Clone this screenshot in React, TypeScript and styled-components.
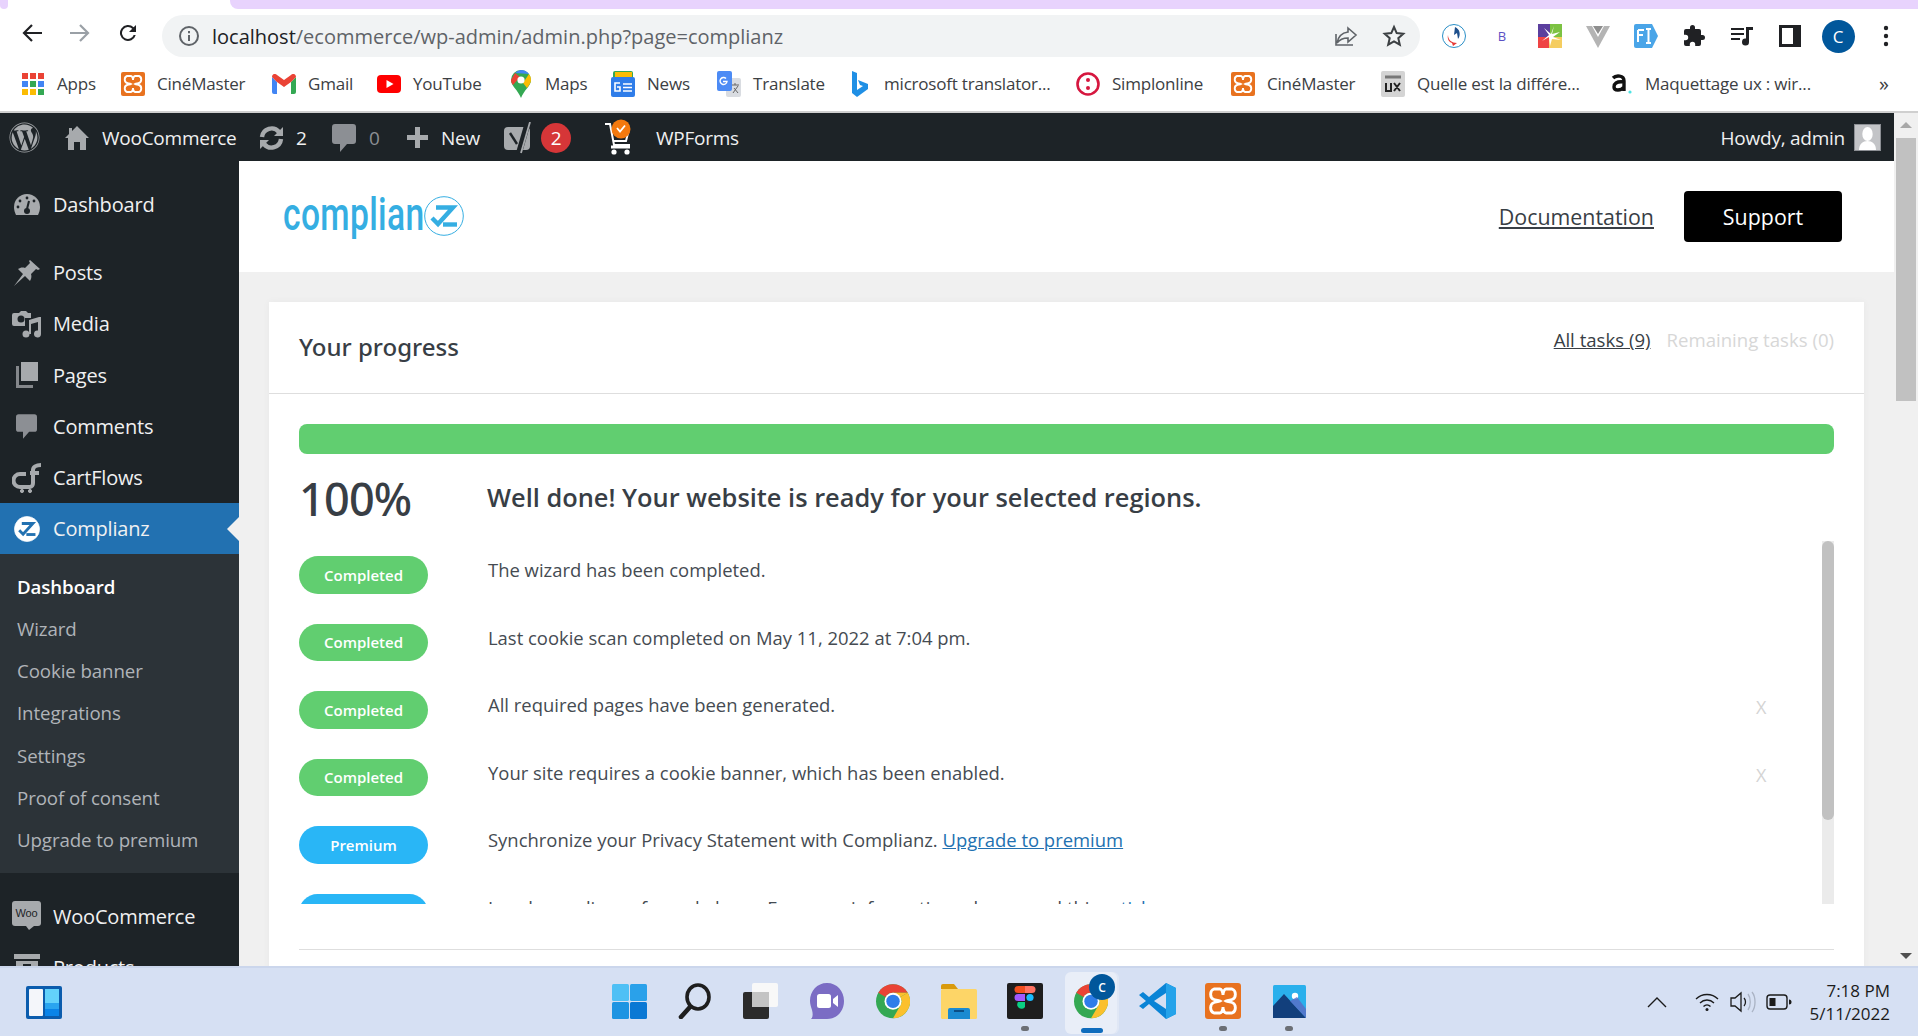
import React from "react";
import styled, { createGlobalStyle } from "styled-components";
import { FaWordpress } from "react-icons/fa";

const Global = createGlobalStyle`
  html, body { margin: 0; padding: 0; height: 100%; overflow: hidden; }
  body { font-family: "Open Sans", "Noto Sans", sans-serif; background: #fff; }
  * { box-sizing: border-box; }
`;

const Page = styled.div`
  width: 1918px;
  height: 1036px;
  display: flex;
  flex-direction: column;
  overflow: hidden;
`;

/* browser chrome */
const TabStrip = styled.div`
  height: 9px;
  flex: none;
  display: flex;
  justify-content: space-between;
`;
const TabCorner = styled.div<{ $w: number }>`
  width: ${({ $w }) => $w}px;
  background: #e8d3fd;
  border-bottom-left-radius: 8px;
  border-bottom-right-radius: ${({ $w }) => ($w < 20 ? 8 : 0)}px;
`;
const Toolbar = styled.div`
  height: 48px;
  flex: none;
  display: flex;
  align-items: center;
  padding-left: 8px;
`;
const NavBtn = styled.div`
  width: 48px;
  height: 32px;
  display: flex;
  align-items: center;
  justify-content: center;
`;
const Omnibox = styled.div`
  margin-left: 10px;
  width: 1258px;
  height: 42px;
  margin-top: 6px;
  border-radius: 21px;
  background: #f1f3f4;
  display: flex;
  align-items: center;
  padding: 0 2px 0 16px;
  font-size: 20px;
  color: #5f6368;
`;
const Url = styled.div`
  margin-left: 12px;
  flex: 1;
  b { font-weight: 400; color: #202124; }
`;
const OmniIcon = styled.div`
  width: 48px;
  display: flex;
  justify-content: center;
`;
const Extensions = styled.div`
  display: flex;
  align-items: center;
  margin-top: 6px;
  margin-left: 10px;
`;
const Ext = styled.div`
  width: 48px;
  display: flex;
  justify-content: center;
  align-items: center;
`;
const Avatar = styled.div`
  width: 33px;
  height: 33px;
  border-radius: 50%;
  background: #01579b;
  color: #fff;
  font-size: 17px;
  display: flex;
  align-items: center;
  justify-content: center;
`;
const BookmarkBar = styled.div`
  height: 56px;
  flex: none;
  display: flex;
  align-items: center;
  padding-left: 21px;
  padding-bottom: 1px;
  border-bottom: 2px solid #cfcfcf;
  font-size: 17px;
  color: #3c4043;
`;
const Bookmark = styled.div<{ $w: number }>`
  width: ${({ $w }) => $w}px;
  display: flex;
  align-items: center;
  gap: 12px;
  white-space: nowrap;
  letter-spacing: -0.2px;
`;
const BookmarkIcon = styled.div`
  width: 24px;
  height: 26px;
  flex: none;
  display: flex;
  align-items: center;
  justify-content: center;
`;
const More = styled.div`
  margin-left: 45px;
  font-size: 20px;
`;

const Middle = styled.div`
  flex: 1;
  min-height: 0;
  display: flex;
`;
const MiddleMain = styled.div`
  flex: 1;
  min-width: 0;
  display: flex;
  flex-direction: column;
`;

/* wp admin bar */
const AdminBar = styled.div`
  height: 48px;
  flex: none;
  background: #1d2327;
  color: #f0f0f1;
  display: flex;
  align-items: center;
  font-size: 19px;
  letter-spacing: -0.25px;
  padding-top: 1px;
`;
const BarItem = styled.div<{ $w: number; $dim?: boolean; $gap?: number; $pad?: number }>`
  width: ${({ $w }) => $w}px;
  flex: none;
  display: flex;
  align-items: center;
  gap: ${({ $gap }) => $gap ?? 11}px;
  padding-left: ${({ $pad }) => $pad ?? 0}px;
  white-space: nowrap;
  color: ${({ $dim }) => ($dim ? "#8c8f94" : "#f0f0f1")};
  svg { flex: none; }
`;
const Badge = styled.span`
  width: 30px;
  height: 30px;
  border-radius: 50%;
  background: #d63638;
  color: #fff;
  font-size: 19px;
  display: flex;
  align-items: center;
  justify-content: center;
  margin-left: -4px;
`;
const Howdy = styled.div`
  margin-left: auto;
  padding-right: 13px;
  display: flex;
  align-items: center;
  gap: 9px;
`;
const UserPic = styled.div`
  width: 27px;
  height: 27px;
  background: #c3c4c7;
  border: 1px solid #8c8f94;
  overflow: hidden;
`;

/* page body */
const Body = styled.div`
  flex: 1;
  min-height: 0;
  display: flex;
  background: #f0f0f0;
  overflow: hidden;
`;
const Sidebar = styled.nav`
  width: 239px;
  flex: none;
  background: #1d2327;
  padding-top: 18px;
`;
const MenuRow = styled.div<{ $active?: boolean; $gap?: number }>`
  position: relative;
  height: 51.2px;
  margin-top: ${({ $gap }) => $gap ?? 0}px;
  display: flex;
  align-items: center;
  gap: 10px;
  padding-left: 10px;
  font-size: 20px;
  letter-spacing: -0.2px;
  color: #f0f0f1;
  background: ${({ $active }) => ($active ? "#2271b1" : "transparent")};
  ${({ $active }) =>
    $active &&
    `&::after {
      content: "";
      position: absolute;
      right: 0;
      top: 14px;
      border: 12px solid transparent;
      border-left-width: 0;
      border-right-color: #f0f0f0;
    }`}
`;
const MenuIcon = styled.div`
  width: 33px;
  height: 33px;
  flex: none;
  display: flex;
  align-items: center;
  justify-content: center;
`;
const SubMenu = styled.div`
  background: #2c3338;
  padding: 11px 0 12px 17px;
  margin-bottom: 18px;
`;
const SubItem = styled.div<{ $current?: boolean }>`
  height: 42.2px;
  display: flex;
  align-items: center;
  font-size: 18.7px;
  letter-spacing: -0.1px;
  color: ${({ $current }) => ($current ? "#fff" : "#b0b4b9")};
  font-weight: ${({ $current }) => ($current ? 600 : 400)};
`;
const Main = styled.main`
  flex: 1;
  min-width: 0;
`;
const Header = styled.header`
  height: 111px;
  background: #fff;
  display: flex;
  align-items: center;
  padding: 0 52px 0 44px;
`;
const Logo = styled.div`
  display: flex;
  align-items: center;
  height: 60px;
  flex: none;
  margin-top: -2px;
`;
const LogoWord = styled.span`
  font-family: "Roboto", sans-serif;
  font-size: 46px;
  font-weight: 500;
  line-height: 60px;
  color: #35aee2;
  display: inline-block;
  width: 141px;
  margin-top: -4px;
  transform: scaleX(0.73);
  transform-origin: left center;
  letter-spacing: 0.5px;
`;
const DocLink = styled.a`
  margin-left: auto;
  font-size: 21.4px;
  color: #383e45;
  text-decoration: underline;
`;
const SupportBtn = styled.button`
  margin-left: 30px;
  width: 158px;
  height: 51px;
  background: #000;
  color: #fff;
  border: 0;
  border-radius: 4px;
  font: inherit;
  font-size: 21.4px;
`;
const Card = styled.section`
  margin: 30px 30px 0;
  background: #fff;
  box-shadow: 0 0 8px rgba(0, 0, 0, 0.04);
`;
const CardHead = styled.div`
  height: 92px;
  border-bottom: 1px solid #dedede;
  padding: 0 30px;
  display: flex;
  align-items: center;
  justify-content: space-between;
`;
const CardTitle = styled.h2`
  margin: 0 0 2px;
  font-family: "Noto Sans", sans-serif;
  font-size: 24px;
  font-weight: 500;
  color: #383e45;
`;
const Tabs = styled.div`
  display: flex;
  gap: 16px;
  font-size: 18.6px;
  margin-top: -16px;
`;
const TabLink = styled.a<{ $on?: boolean }>`
  color: ${({ $on }) => ($on ? "#383e45" : "#d7d7d7")};
  text-decoration: ${({ $on }) => ($on ? "underline" : "none")};
`;
const CardBody = styled.div`
  padding: 30px 30px 0;
`;
const ProgressBar = styled.div`
  height: 30px;
  background: #61ce70;
  border-radius: 8px;
`;
const Summary = styled.div`
  height: 87px;
  display: flex;
  align-items: center;
  padding-bottom: 2px;
`;
const Percent = styled.div`
  width: 188px;
  font-family: "Noto Sans", sans-serif;
  font-size: 45px;
  font-weight: 500;
  color: #383e45;
  letter-spacing: -0.8px;
  padding-top: 3px;
`;
const Message = styled.div`
  font-size: 25.4px;
  font-weight: 600;
  color: #383e45;
`;
const TaskList = styled.div`
  position: relative;
  height: 363px;
  overflow: hidden;
`;
const ListTrack = styled.div`
  position: absolute;
  top: 0;
  right: 0;
  bottom: 0;
  width: 12px;
  background: #ebebeb;
`;
const ListThumb = styled.div`
  height: 279px;
  background: #c1c1c1;
  border-radius: 6px;
`;
const TaskRow = styled.div`
  height: 67.5px;
  display: grid;
  grid-template-columns: 189px 1fr 12px;
  align-items: center;
  padding-right: 66px;
  flex: none;
`;
const Pill = styled.div<{ $tone: string }>`
  width: 129px;
  height: 37.5px;
  border-radius: 19px;
  background: ${({ $tone }) => $tone};
  color: #fff;
  font-size: 15px;
  font-weight: 600;
  display: flex;
  align-items: center;
  justify-content: center;
`;
const TaskText = styled.div`
  font-size: 18.45px;
  color: #454b52;
  padding-bottom: 10px;
  white-space: nowrap;
  a { color: #2271b1; text-decoration: underline; }
`;
const Dismiss = styled.div`
  font-size: 18px;
  color: #d4d4d4;
  padding-bottom: 5px;
`;
const CardFoot = styled.div`
  margin-top: 45px;
  height: 60px;
  border-top: 1px solid #dedede;
`;
const PageScroll = styled.div`
  position: relative;
  width: 24px;
  flex: none;
  background: #f0f0f0;
`;
const ScrollThumb = styled.div`
  position: absolute;
  left: 2px;
  right: 2px;
  top: 25px;
  height: 263px;
  background: #c1c1c1;
`;
const ScrollArrow = styled.div<{ $up?: boolean }>`
  position: absolute;
  left: 6px;
  ${({ $up }) => ($up ? "top: 9px;" : "bottom: 7px;")}
  border: 6px solid transparent;
  border-top-width: ${({ $up }) => ($up ? 0 : 6)}px;
  border-bottom-width: ${({ $up }) => ($up ? 6 : 0)}px;
  ${({ $up }) => ($up ? "border-bottom-color: #a8a8a8;" : "border-top-color: #505050;")}
`;

/* windows taskbar */
const Taskbar = styled.footer`
  height: 70px;
  flex: none;
  background: #d6e0f3;
  border-top: 2px solid #cbd6ec;
  display: flex;
  align-items: center;
  padding-left: 26px;
`;
const Apps = styled.div`
  margin-left: 534px;
  display: flex;
`;
const AppSlot = styled.div<{ $state?: "open" | "active" }>`
  position: relative;
  width: 66px;
  height: 62px;
  display: flex;
  align-items: center;
  justify-content: center;
  margin-top: 2px;
  padding-bottom: 4px;
  ${({ $state }) =>
    $state === "open" &&
    `&::after {
      content: "";
      position: absolute;
      left: 29px;
      bottom: 3px;
      width: 8px;
      height: 5px;
      border-radius: 3px;
      background: #6c6f75;
    }`}
  ${({ $state }) =>
    $state === "active" &&
    `background: #e9eef8;
    border-radius: 6px;
    box-shadow: 2px 0 0 #e0e7f5;
    width: 52px;
    margin: 2px 7px 0;
    &::after {
      content: "";
      position: absolute;
      left: 16px;
      bottom: 1px;
      width: 22px;
      height: 5px;
      border-radius: 3px;
      background: #0f6cbd;
    }`}
`;
const CornerBadge = styled.div`
  position: absolute;
  top: 2px;
  right: 2px;
  width: 26px;
  height: 26px;
  border-radius: 50%;
  background: #01579b;
  color: #fff;
  font-size: 12px;
  font-weight: 600;
  display: flex;
  align-items: center;
  justify-content: center;
`;
const Tray = styled.div`
  margin-left: auto;
  padding-right: 28px;
  display: flex;
  align-items: center;
`;
const TrayIcon = styled.div<{ $w: number; $ml?: number }>`
  width: ${({ $w }) => $w}px;
  margin-left: ${({ $ml }) => $ml ?? 0}px;
  display: flex;
  justify-content: center;
`;
const Clock = styled.div`
  margin-left: 10px;
  text-align: right;
  font-size: 17px;
  line-height: 23px;
  color: #1b1b1b;
`;

const Back = ({ c = "#202124" }: { c?: string }) => (
  <svg width="22" height="22" viewBox="0 0 22 22" fill="none" stroke={c} strokeWidth="2.2">
    <path d="M21 11H3M11 3l-8 8 8 8" />
  </svg>
);
const Forward = () => (
  <svg width="22" height="22" viewBox="0 0 22 22" fill="none" stroke="#9aa0a6" strokeWidth="2.2">
    <path d="M1 11h18M11 3l8 8-8 8" />
  </svg>
);
const Reload = () => (
  <svg width="24" height="24" viewBox="0 0 24 24" fill="#202124">
    <path d="M17.65 6.35A8 8 0 1 0 19.73 14h-2.08a6 6 0 1 1-1.41-6.24L13 11h7V4z" />
  </svg>
);
const Info = () => (
  <svg width="22" height="22" viewBox="0 0 22 22" fill="none" stroke="#5f6368" strokeWidth="2">
    <circle cx="11" cy="11" r="9" />
    <path d="M11 10v6M11 6v2.2" />
  </svg>
);
const Share = () => (
  <svg width="24" height="24" viewBox="0 0 24 24" fill="none" stroke="#5f6368" strokeWidth="1.6">
    <path d="M14 4l8 7-8 7v-4c-5 0-8 1-11 5 1-6 4-10 11-11zM2 10v11h17" />
  </svg>
);
const Star = () => (
  <svg width="24" height="24" viewBox="0 0 24 24" fill="none" stroke="#3c4043" strokeWidth="2">
    <path d="M12 3l2.7 6.1 6.6.7-5 4.4 1.5 6.5-5.8-3.4-5.8 3.4 1.5-6.5-5-4.4 6.6-.7z" />
  </svg>
);
const SyncExt = () => (
  <svg width="26" height="26" viewBox="0 0 26 26" fill="none">
    <circle cx="13" cy="13" r="11.5" stroke="#2a8fc7" />
    <path d="M14 4c5 2 6 8 3 12l-1-6-3 2z" fill="#1d4f8c" />
    <path d="M7 12c0 5 4 8 9 8l-4 3-1-3c-3-1-5-4-4-8z" fill="#e53935" />
  </svg>
);
const BExt = styled.span`
  color: #5b50c4;
  font-size: 13px;
`;
const ColorExt = () => (
  <svg width="24" height="24" viewBox="0 0 24 24">
    <rect width="12" height="13" fill="#5b3f9e" />
    <rect x="12" width="12" height="13" fill="#7cc242" />
    <rect y="13" width="11" height="11" fill="#ef4444" />
    <rect x="11" y="13" width="13" height="11" fill="#f5cd60" />
    <path d="M12 22L11 13 4 17l7-6-5-7 7 6 3-8-2 8 8-2-7 5 8 3-9-1z" fill="#fff" />
  </svg>
);
const VExt = () => (
  <svg width="24" height="24" viewBox="0 0 24 24">
    <path d="M0 2h24L12 24z" fill="#b4b4b4" />
    <path d="M6 2h12l-6 11z" fill="#fff" />
    <path d="M7 2h10l-5 8z" fill="#8e8e8e" />
  </svg>
);
const FiExt = () => (
  <svg width="24" height="24" viewBox="0 0 24 24">
    <path d="M2 0h16l6 12-6 12H2a2 2 0 0 1-2-2V2a2 2 0 0 1 2-2z" fill="#4aa5e8" />
    <path d="M4 6h6M4 6v12M4 11h5M12 5h5M12 19h5M14.5 5v14" stroke="#fff" strokeWidth="2" fill="none" />
  </svg>
);
const Puzzle = () => (
  <svg width="24" height="24" viewBox="0 0 24 24" fill="#202124">
    <path d="M20.5 11H19V7a2 2 0 0 0-2-2h-4V3.5a2.5 2.5 0 0 0-5 0V5H4a2 2 0 0 0-2 2v3.8h1.5a2.7 2.7 0 0 1 0 5.4H2V20a2 2 0 0 0 2 2h3.8v-1.5a2.7 2.7 0 0 1 5.4 0V22H17a2 2 0 0 0 2-2v-4h1.5a2.5 2.5 0 0 0 0-5z" />
  </svg>
);
const Queue = () => (
  <svg width="24" height="22" viewBox="0 0 24 22" fill="#202124">
    <path d="M1 3h13v2H1zM1 8h13v2H1zM1 13h9v2H1zM16 2h7v3h-4v12a3.5 3.5 0 1 1-3-3.4z" />
  </svg>
);
const SidePanel = () => (
  <svg width="22" height="22" viewBox="0 0 22 22" fill="none" stroke="#202124" strokeWidth="3">
    <rect x="1.5" y="1.5" width="19" height="19" />
    <rect x="14" y="2" width="6" height="18" fill="#202124" stroke="none" />
  </svg>
);
const Dots = () => (
  <svg width="6" height="22" viewBox="0 0 6 22" fill="#202124">
    <circle cx="3" cy="3" r="2.2" />
    <circle cx="3" cy="11" r="2.2" />
    <circle cx="3" cy="19" r="2.2" />
  </svg>
);

const Grid = () => (
  <svg width="22" height="24" viewBox="0 0 22 24">
    {["#ea4335", "#ea4335", "#ea4335", "#4285f4", "#34a853", "#4285f4", "#fbbc04", "#fbbc04", "#34a853"].map((c, i) => (
      <rect key={i} x={(i % 3) * 8} y={Math.floor(i / 3) * 8 + 1} width="6" height="6" fill={c} />
    ))}
  </svg>
);
const Xampp = ({ s = 24 }: { s?: number }) => (
  <svg width={s} height={s} viewBox="0 0 24 24">
    <rect width="24" height="24" rx="2" fill="#e8721f" />
    <path d="M6 4h4c1 0 2 2 2 4 0-2 1-4 2-4h4c3 1 3 6 0 7-1 .4-3 .4-4 1 1 .6 3 .6 4 1 3 1 3 6 0 7h-4c-1 0-2-2-2-4 0 2-1 4-2 4H6c-3-1-3-6 0-7 1-.4 3-.4 4-1-1-.6-3-.6-4-1-3-1-3-6 0-7z" fill="none" stroke="#fff" strokeWidth="1.9" />
  </svg>
);
const Gmail = () => (
  <svg width="24" height="20" viewBox="0 0 24 20">
    <path d="M0 3v15a2 2 0 0 0 2 2h3V8z" fill="#4285f4" />
    <path d="M24 3v15a2 2 0 0 1-2 2h-3V8z" fill="#34a853" />
    <path d="M0 3l5 5 7 5 7-5 5-5c0-3-3-4-5-2l-7 5-7-5C3-1 0 0 0 3z" fill="#ea4335" />
  </svg>
);
const Youtube = () => (
  <svg width="24" height="18" viewBox="0 0 24 18">
    <rect width="24" height="18" rx="4" fill="#f00" />
    <path d="M9.5 5l7 4-7 4z" fill="#fff" />
  </svg>
);
const MapsPin = () => (
  <svg width="20" height="28" viewBox="0 0 20 28">
    <path d="M10 0a10 10 0 0 1 10 10c0 6-7 10-10 18C7 20 0 16 0 10A10 10 0 0 1 10 0z" fill="#34a853" />
    <path d="M10 0a10 10 0 0 1 8 4L4 3a10 10 0 0 1 6-3z" fill="#4285f4" />
    <path d="M18 4a10 10 0 0 1 2 6c0 3-2 5-4 8L12 13z" fill="#fbbc04" />
    <path d="M4 3L0 10c0 2 1 4 2 5l7-8z" fill="#ea4335" />
    <circle cx="10" cy="10" r="3.6" fill="#fff" />
  </svg>
);
const NewsIcon = () => (
  <svg width="24" height="26" viewBox="0 0 24 26">
    <rect x="2" width="20" height="10" rx="2" fill="#34a853" />
    <rect x="4" y="1" width="17" height="8" fill="#fbbc04" />
    <rect y="6" width="24" height="20" rx="2" fill="#2f7de9" />
    <path d="M9 12H4v8h5v-4H6M12 13h9M12 16.5h9M12 20h9" stroke="#fff" strokeWidth="1.6" fill="none" />
  </svg>
);
const TranslateIcon = () => (
  <svg width="24" height="26" viewBox="0 0 24 26">
    <rect x="9" y="7" width="15" height="19" rx="2" fill="#d9dce1" />
    <rect width="15" height="20" rx="2" fill="#4c8bf5" />
    <path d="M11 7.5a3.5 3.5 0 1 0 1 3H8" stroke="#fff" strokeWidth="1.4" fill="none" transform="translate(-2 0)" />
    <path d="M15 14h7M18 12v2M16 22l5-7M17 17l4 5" stroke="#666" strokeWidth="1" fill="none" />
  </svg>
);
const Bing = () => (
  <svg width="16" height="26" viewBox="0 0 16 26">
    <path d="M0 0l5 2v17l6-4-3-1-2-5 10 4v5L5 26 0 22z" fill="#1f8fe5" />
  </svg>
);
const Simplon = () => (
  <svg width="24" height="24" viewBox="0 0 24 24" fill="none">
    <circle cx="12" cy="12" r="10.5" stroke="#d6173f" strokeWidth="2.6" />
    <circle cx="12" cy="8" r="2" fill="#d6173f" />
    <circle cx="12" cy="16" r="2" fill="#d6173f" />
  </svg>
);
const BlogUx = () => (
  <svg width="24" height="26" viewBox="0 0 24 26">
    <rect width="24" height="26" rx="2" fill="#d4d4d4" />
    <path d="M5 12v8h5v-8M13 12l6 8M19 12l-6 8" stroke="#222" strokeWidth="2" fill="none" />
    <path d="M4 6h16" stroke="#777" strokeWidth="3" />
  </svg>
);
const AmazonA = () => (
  <svg width="24" height="24" viewBox="0 0 24 24">
    <path d="M4 6c3-3 11-3 11 3v10M15 10c-8-1-10 2-10 5 0 4 7 4 10 0" fill="none" stroke="#111" strokeWidth="3.4" />
    <circle cx="21" cy="20" r="1.6" fill="#4fe3e3" />
  </svg>
);

const HomeIcon = () => (
  <svg width="24" height="26" viewBox="0 0 24 26" fill="#a7aaad">
    <path d="M12 1l12 12h-3v12h-6v-8H9v8H3V13H0l4-4V3h3v3z" />
  </svg>
);
const UpdateIcon = () => (
  <svg width="27" height="26" viewBox="0 0 27 26" fill="none" stroke="#a7aaad" strokeWidth="4.4">
    <path d="M4 12a9.6 9.6 0 0 1 17-5" />
    <path d="M23 14a9.6 9.6 0 0 1-17 5" />
    <path d="M25 2v9h-9z" fill="#a7aaad" stroke="none" />
    <path d="M2 24v-9h9z" fill="#a7aaad" stroke="none" />
  </svg>
);
const BubbleIcon = ({ s = 24 }: { s?: number }) => (
  <svg width={s} height={s + 4} viewBox="0 0 24 28" fill="#8c8f94">
    <path d="M3 0h18a3 3 0 0 1 3 3v14a3 3 0 0 1-3 3h-6l-7 8v-8H3a3 3 0 0 1-3-3V3a3 3 0 0 1 3-3z" />
  </svg>
);
const PlusIcon = () => (
  <svg width="21" height="21" viewBox="0 0 21 21" fill="#a7aaad">
    <path d="M8 0h5v8h8v5h-8v8H8v-8H0V8h8z" />
  </svg>
);
const YoastIcon = () => (
  <svg width="30" height="32" viewBox="0 0 30 32">
    <rect y="5" width="26" height="23" rx="4" fill="#a7aaad" />
    <path d="M6 11l7 11" stroke="#1d2327" strokeWidth="2.4" fill="none" />
    <path d="M24 0l-9 31" stroke="#1d2327" strokeWidth="6" />
    <path d="M26 0l-9 31" stroke="#a7aaad" strokeWidth="1.8" />
  </svg>
);
const CartIcon = () => (
  <svg width="30" height="38" viewBox="0 0 30 38" fill="none">
    <path d="M1 5h5l4 21h16M8 14h16l-2 8H10" stroke="#fff" strokeWidth="2" />
    <circle cx="10" cy="33" r="2.6" fill="#fff" />
    <circle cx="23" cy="33" r="2.6" fill="#fff" />
    <path d="M7 28h19" stroke="#fff" strokeWidth="3" />
    <circle cx="17" cy="10" r="9.5" fill="#f3790e" />
    <path d="M13 9l3 3.5 5-6" stroke="#fff" strokeWidth="1.8" />
  </svg>
);
const Person = () => (
  <svg width="25" height="25" viewBox="0 0 25 25" fill="#fff">
    <ellipse cx="12.5" cy="9" rx="5.2" ry="7" />
    <path d="M4 25c0-6 4-9 8.5-9s8.5 3 8.5 9z" />
  </svg>
);

const Gauge = () => (
  <svg width="26" height="22" viewBox="0 0 26 22" fill="#a7aaad">
    <path d="M13 0a13 13 0 0 1 13 13c0 3-1 6-2 8H2c-1-2-2-5-2-8A13 13 0 0 1 13 0z" />
    <circle cx="13" cy="4" r="1.4" fill="#1d2327" />
    <circle cx="6" cy="7" r="1.4" fill="#1d2327" />
    <circle cx="20" cy="7" r="1.4" fill="#1d2327" />
    <circle cx="4" cy="13" r="1.4" fill="#1d2327" />
    <path d="M15 7l-2 8" stroke="#1d2327" strokeWidth="2" />
    <circle cx="13" cy="17" r="3" fill="#1d2327" />
  </svg>
);
const Pin = () => (
  <svg width="28" height="28" viewBox="0 0 28 28" fill="#a7aaad">
    <path d="M17 1l10 9-2 1-2-1-5 5c1 3 0 5-1 7l-5-5-11 10 9-12-5-5c2-1 4-2 7-1l5-5-1-2z" />
  </svg>
);
const MediaIcon = () => (
  <svg width="29" height="28" viewBox="0 0 29 28" fill="#a7aaad">
    <path d="M2 3h5l2-2h5l2 2h3v5h-6v8H2a2 2 0 0 1-2-2V5a2 2 0 0 1 2-2z" />
    <circle cx="9" cy="9" r="3.5" fill="#1d2327" />
    <path d="M27 7h2v17a3.5 3.5 0 1 1-3-3.5V12l-7 2v10h-2V10z" />
    <circle cx="14" cy="24" r="3.5" />
  </svg>
);
const PagesIcon = () => (
  <svg width="22" height="26" viewBox="0 0 22 26" fill="#a7aaad">
    <path d="M5 0h17v19H5z" />
    <path d="M0 4h3v19h14v3H0z" opacity=".75" />
  </svg>
);
const CartFlowsIcon = () => (
  <svg width="30" height="31" viewBox="0 0 30 31" fill="none" stroke="#a7aaad" strokeWidth="4">
    <path d="M14 12H8a6 6 0 0 0 0 13h10c2 0 3-2 3-4V8c0-3 3-5 8-5" />
    <path d="M18 11h9" />
    <circle cx="10" cy="29" r="1.6" fill="#a7aaad" strokeWidth="1" />
    <circle cx="18" cy="29" r="1.6" fill="#a7aaad" strokeWidth="1" />
  </svg>
);
const ZMark = ({ s, bg, fg, ring }: { s: number; bg: string; fg: string; ring?: string }) => (
  <svg width={s} height={s} viewBox="0 0 40 40" fill="none">
    <circle cx="20" cy="20" r="19.3" fill={bg} stroke={ring ?? bg} strokeWidth="1" />
    <path d="M12 11.5H29L14 28L8 22" stroke={fg} strokeWidth="4.4" />
    <path d="M19 28.5H33" stroke={fg} strokeWidth="4.4" />
  </svg>
);
const WooIcon = () => (
  <svg width="30" height="30" viewBox="0 0 30 30">
    <rect width="29" height="25" rx="3" fill="#a7aaad" />
    <path d="M14 25h8l-5 4z" fill="#a7aaad" />
    <text x="14.5" y="16" textAnchor="middle" fontSize="11" fontFamily="Liberation Sans, sans-serif" fill="#1d2327">Woo</text>
  </svg>
);
const BoxIcon = () => (
  <svg width="28" height="28" viewBox="0 0 28 28" fill="#a7aaad">
    <path d="M1 1h26v5H1zM3 8h22v19H3z" />
    <path d="M10 11h8v3h-8z" fill="#1d2327" />
  </svg>
);

const Widgets = () => (
  <svg width="36" height="33" viewBox="0 0 36 33">
    <rect width="36" height="33" rx="2" fill="#0b5cad" />
    <rect x="3" y="3" width="14" height="27" rx="1" fill="#f4f6fa" />
    <rect x="19" y="3" width="14" height="14" fill="#63d2fb" />
    <rect x="19" y="17" width="14" height="6" fill="#2aa5f0" />
    <rect x="19" y="23" width="14" height="7" fill="#0a84e8" />
  </svg>
);
const WinStart = () => (
  <svg width="35" height="35" viewBox="0 0 35 35">
    <rect width="17" height="17" rx="1.5" fill="#4fc0f5" />
    <rect x="18" width="17" height="17" rx="1.5" fill="#2aa1ea" />
    <rect y="18" width="17" height="17" rx="1.5" fill="#1d94e2" />
    <rect x="18" y="18" width="17" height="17" rx="1.5" fill="#0a78d4" />
  </svg>
);
const SearchIcon = () => (
  <svg width="34" height="36" viewBox="0 0 34 36" fill="none" stroke="#1e1e1e">
    <ellipse cx="20" cy="14" rx="11" ry="12" strokeWidth="3.6" />
    <path d="M12 24L3 34" strokeWidth="4.6" strokeLinecap="round" />
  </svg>
);
const TaskView = () => (
  <svg width="36" height="36" viewBox="0 0 36 36">
    <rect y="9" width="26" height="27" rx="2" fill="#2b2b2b" />
    <rect x="9" width="26" height="24" rx="2" fill="#f8f8f8" />
    <rect x="9" y="9" width="17" height="15" fill="#c4c4c4" />
  </svg>
);
const Teams = () => (
  <svg width="36" height="38" viewBox="0 0 36 38">
    <path d="M18 1c10 0 17 8 17 18s-7 18-17 18H2c2-2 2-5 1-9-1-3-2-6-2-9C1 9 8 1 18 1z" fill="#7b6cc4" />
    <rect x="8" y="12" width="14" height="14" rx="2.5" fill="#fff" />
    <path d="M24 17l5-4v12l-5-4z" fill="#fff" />
  </svg>
);
const Chrome = ({ s = 34 }: { s?: number }) => (
  <svg width={s} height={s * 1.08} viewBox="0 0 48 48">
    <circle cx="24" cy="24" r="24" fill="#34a853" />
    <path d="M24 0a24 24 0 0 1 20.8 12H24a12 12 0 0 0-10.4 6L3.2 12A24 24 0 0 1 24 0z" fill="#ea4335" />
    <path d="M44.8 12A24 24 0 0 1 24 48l10.4-18a12 12 0 0 0 0-12z" fill="#fbc02d" />
    <path d="M44.8 12H24l10.4 6z" fill="#fbc02d" />
    <circle cx="24" cy="24" r="12" fill="#fff" />
    <circle cx="24" cy="24" r="9.5" fill="#2f7de9" />
  </svg>
);
const Folder = () => (
  <svg width="36" height="36" viewBox="0 0 36 36">
    <path d="M0 3a2 2 0 0 1 2-2h11l4 5h-17z" fill="#d99a0c" />
    <rect y="6" width="36" height="30" rx="1.5" fill="#fdd567" />
    <path d="M7 36V27a2 2 0 0 1 2-2h18a2 2 0 0 1 2 2v9z" fill="#1b8ad1" />
    <rect x="13" y="27" width="10" height="2" fill="#0b4f86" />
  </svg>
);
const Figma = () => (
  <svg width="36" height="36" viewBox="0 0 36 36">
    <rect width="36" height="36" rx="2" fill="#1e1e1e" />
    <path d="M11 3h7v7h-7a3.5 3.5 0 0 1 0-7z" fill="#f24e1e" />
    <path d="M18 3h7a3.5 3.5 0 0 1 0 7h-7z" fill="#ff7262" />
    <path d="M11 11h7v7h-7a3.5 3.5 0 0 1 0-7z" fill="#a259ff" />
    <circle cx="23" cy="14.5" r="3.6" fill="#1abcfe" />
    <path d="M11 19h7v5a3.5 3.5 0 1 1-7-5z" fill="#0acf83" />
  </svg>
);
const VsCode = () => (
  <svg width="37" height="38" viewBox="0 0 37 38">
    <path d="M27 1l10 5v26l-10 5L10 22l-6 5-4-3 7-5-7-6 4-3 6 5z" fill="#0a84d6" />
    <path d="M27 11L15 19l12 8z" fill="#d6e0f3" />
    <path d="M27 1l10 5v26l-10 5z" fill="#25a3ea" />
  </svg>
);
const Photos = () => (
  <svg width="33" height="33" viewBox="0 0 33 33">
    <rect width="33" height="33" rx="1.5" fill="#2ab0ec" />
    <circle cx="22" cy="11" r="3.2" fill="#fff" />
    <path d="M0 33V21L11 9l22 24z" fill="#123f7c" />
    <path d="M17 16l7-4 9 12v9z" fill="#5b6cc4" opacity=".8" />
  </svg>
);
const Wifi = () => (
  <svg width="26" height="20" viewBox="0 0 26 20" fill="none" stroke="#1b1b1b" strokeWidth="1.3">
    <path d="M2 7c6-6 16-6 22 0M6 11c4-4 10-4 14 0M9.5 14.5c2-2 5-2 7 0" />
    <circle cx="13" cy="17.5" r="1.5" fill="#1b1b1b" stroke="none" />
  </svg>
);
const Speaker = () => (
  <svg width="26" height="24" viewBox="0 0 26 24" fill="none" stroke="#1b1b1b" strokeWidth="1.3">
    <path d="M1 8h4l6-5v18l-6-5H1z" />
    <path d="M14 8c2 2 2 6 0 8" />
    <path d="M18 4c3 4 3 12 0 16M22 2c4 5 4 15 0 20" stroke="#aab3c4" />
  </svg>
);
const Battery = () => (
  <svg width="26" height="16" viewBox="0 0 26 16" fill="none">
    <rect x="1" y="1" width="20" height="14" rx="3" stroke="#1b1b1b" strokeWidth="1.4" />
    <rect x="3.5" y="4" width="6" height="8" fill="#1b1b1b" />
    <path d="M23 5.5a2.5 2.5 0 0 1 0 5z" fill="#1b1b1b" />
  </svg>
);
const Chevron = () => (
  <svg width="20" height="12" viewBox="0 0 20 12" fill="none" stroke="#1b1b1b" strokeWidth="1.4">
    <path d="M1 11l9-9 9 9" />
  </svg>
);

const bookmarks: { label: string; w: number; icon: React.ReactNode }[] = [
  { label: "Apps", w: 100, icon: <Grid /> },
  { label: "CinéMaster", w: 151, icon: <Xampp /> },
  { label: "Gmail", w: 105, icon: <Gmail /> },
  { label: "YouTube", w: 132, icon: <Youtube /> },
  { label: "Maps", w: 102, icon: <MapsPin /> },
  { label: "News", w: 106, icon: <NewsIcon /> },
  { label: "Translate", w: 131, icon: <TranslateIcon /> },
  { label: "microsoft translator...", w: 228, icon: <Bing /> },
  { label: "Simplonline", w: 155, icon: <Simplon /> },
  { label: "CinéMaster", w: 150, icon: <Xampp /> },
  { label: "Quelle est la différe...", w: 228, icon: <BlogUx /> },
  { label: "Maquettage ux : wir...", w: 225, icon: <AmazonA /> },
];

const subItems = ["Dashboard", "Wizard", "Cookie banner", "Integrations", "Settings", "Proof of consent", "Upgrade to premium"];

const GREEN = "#61ce70";
const BLUE = "#29b6f6";

const tasks: { status: string; tone: string; text: React.ReactNode; dismiss?: boolean }[] = [
  { status: "Completed", tone: GREEN, text: "The wizard has been completed." },
  { status: "Completed", tone: GREEN, text: "Last cookie scan completed on May 11, 2022 at 7:04 pm." },
  { status: "Completed", tone: GREEN, text: "All required pages have been generated.", dismiss: true },
  { status: "Completed", tone: GREEN, text: "Your site requires a cookie banner, which has been enabled.", dismiss: true },
  {
    status: "Premium",
    tone: BLUE,
    text: (
      <>
        Synchronize your Privacy Statement with Complianz. <a>Upgrade to premium</a>
      </>
    ),
  },
  {
    status: "Premium",
    tone: BLUE,
    text: (
      <>
        Legal compliance for webshops. For more information, please read this <a>article</a>
      </>
    ),
  },
];

export default function App() {
  return (
    <Page>
      <Global />
      <TabStrip>
        <TabCorner $w={8} />
        <TabCorner $w={1688} />
      </TabStrip>
      <Toolbar>
        <NavBtn>
          <Back />
        </NavBtn>
        <NavBtn>
          <Forward />
        </NavBtn>
        <NavBtn>
          <Reload />
        </NavBtn>
        <Omnibox>
          <Info />
          <Url>
            <b>localhost</b>/ecommerce/wp-admin/admin.php?page=complianz
          </Url>
          <OmniIcon>
            <Share />
          </OmniIcon>
          <OmniIcon>
            <Star />
          </OmniIcon>
        </Omnibox>
        <Extensions>
          <Ext><SyncExt /></Ext>
          <Ext><BExt>B</BExt></Ext>
          <Ext><ColorExt /></Ext>
          <Ext><VExt /></Ext>
          <Ext><FiExt /></Ext>
          <Ext><Puzzle /></Ext>
          <Ext><Queue /></Ext>
          <Ext><SidePanel /></Ext>
          <Ext><Avatar>C</Avatar></Ext>
          <Ext><Dots /></Ext>
        </Extensions>
      </Toolbar>
      <BookmarkBar>
        {bookmarks.map((b, i) => (
          <Bookmark key={i} $w={b.w}>
            <BookmarkIcon>{b.icon}</BookmarkIcon>
            {b.label}
          </Bookmark>
        ))}
        <More>»</More>
      </BookmarkBar>
      <Middle>
        <MiddleMain>
          <AdminBar>
            <BarItem $w={65} $pad={9}>
              <FaWordpress size={31} color="#a7aaad" />
            </BarItem>
            <BarItem $w={193} $gap={13}>
              <HomeIcon /> WooCommerce
            </BarItem>
            <BarItem $w={74}>
              <UpdateIcon /> 2
            </BarItem>
            <BarItem $w={75} $dim $gap={13}>
              <BubbleIcon /> 0
            </BarItem>
            <BarItem $w={97} $gap={13}>
              <PlusIcon /> New
            </BarItem>
            <BarItem $w={100}>
              <YoastIcon />
              <Badge>2</Badge>
            </BarItem>
            <BarItem $w={160} $gap={22}>
              <CartIcon /> WPForms
            </BarItem>
            <Howdy>
              Howdy, admin
              <UserPic>
                <Person />
              </UserPic>
            </Howdy>
          </AdminBar>
          <Body>
            <Sidebar>
              <MenuRow>
                <MenuIcon><Gauge /></MenuIcon>Dashboard
              </MenuRow>
              <MenuRow $gap={17}>
                <MenuIcon><Pin /></MenuIcon>Posts
              </MenuRow>
              <MenuRow>
                <MenuIcon><MediaIcon /></MenuIcon>Media
              </MenuRow>
              <MenuRow>
                <MenuIcon><PagesIcon /></MenuIcon>Pages
              </MenuRow>
              <MenuRow>
                <MenuIcon><BubbleIcon s={21} /></MenuIcon>Comments
              </MenuRow>
              <MenuRow>
                <MenuIcon><CartFlowsIcon /></MenuIcon>CartFlows
              </MenuRow>
              <MenuRow $active>
                <MenuIcon><ZMark s={26} bg="#fff" fg="#2271b1" /></MenuIcon>Complianz
              </MenuRow>
              <SubMenu>
                {subItems.map((s, i) => (
                  <SubItem key={s} $current={i === 0}>
                    {s}
                  </SubItem>
                ))}
              </SubMenu>
              <MenuRow>
                <MenuIcon><WooIcon /></MenuIcon>WooCommerce
              </MenuRow>
              <MenuRow>
                <MenuIcon><BoxIcon /></MenuIcon>Products
              </MenuRow>
            </Sidebar>
            <Main>
              <Header>
                <Logo>
                  <LogoWord>complian</LogoWord>
                  <ZMark s={40} bg="#fff" fg="#35aee2" ring="#35aee2" />
                </Logo>
                <DocLink>Documentation</DocLink>
                <SupportBtn>Support</SupportBtn>
              </Header>
              <Card>
                <CardHead>
                  <CardTitle>Your progress</CardTitle>
                  <Tabs>
                    <TabLink $on>All tasks (9)</TabLink>
                    <TabLink>Remaining tasks (0)</TabLink>
                  </Tabs>
                </CardHead>
                <CardBody>
                  <ProgressBar />
                  <Summary>
                    <Percent>100%</Percent>
                    <Message>Well done! Your website is ready for your selected regions.</Message>
                  </Summary>
                  <TaskList>
                    {tasks.map((t, i) => (
                      <TaskRow key={i}>
                        <Pill $tone={t.tone}>{t.status}</Pill>
                        <TaskText>{t.text}</TaskText>
                        {t.dismiss ? <Dismiss>X</Dismiss> : <span />}
                      </TaskRow>
                    ))}
                    <ListTrack>
                      <ListThumb />
                    </ListTrack>
                  </TaskList>
                  <CardFoot />
                </CardBody>
              </Card>
            </Main>
          </Body>
        </MiddleMain>
        <PageScroll>
          <ScrollArrow $up />
          <ScrollThumb />
          <ScrollArrow />
        </PageScroll>
      </Middle>
      <Taskbar>
        <Widgets />
        <Apps>
          <AppSlot><WinStart /></AppSlot>
          <AppSlot><SearchIcon /></AppSlot>
          <AppSlot><TaskView /></AppSlot>
          <AppSlot><Teams /></AppSlot>
          <AppSlot><Chrome /></AppSlot>
          <AppSlot><Folder /></AppSlot>
          <AppSlot $state="open"><Figma /></AppSlot>
          <AppSlot $state="active">
            <Chrome />
            <CornerBadge>C</CornerBadge>
          </AppSlot>
          <AppSlot><VsCode /></AppSlot>
          <AppSlot $state="open"><Xampp s={36} /></AppSlot>
          <AppSlot $state="open"><Photos /></AppSlot>
        </Apps>
        <Tray>
          <TrayIcon $w={40}><Chevron /></TrayIcon>
          <TrayIcon $w={40} $ml={10}><Wifi /></TrayIcon>
          <TrayIcon $w={32}><Speaker /></TrayIcon>
          <TrayIcon $w={40}><Battery /></TrayIcon>
          <Clock>
            7:18 PM
            <br />
            5/11/2022
          </Clock>
        </Tray>
      </Taskbar>
    </Page>
  );
}
